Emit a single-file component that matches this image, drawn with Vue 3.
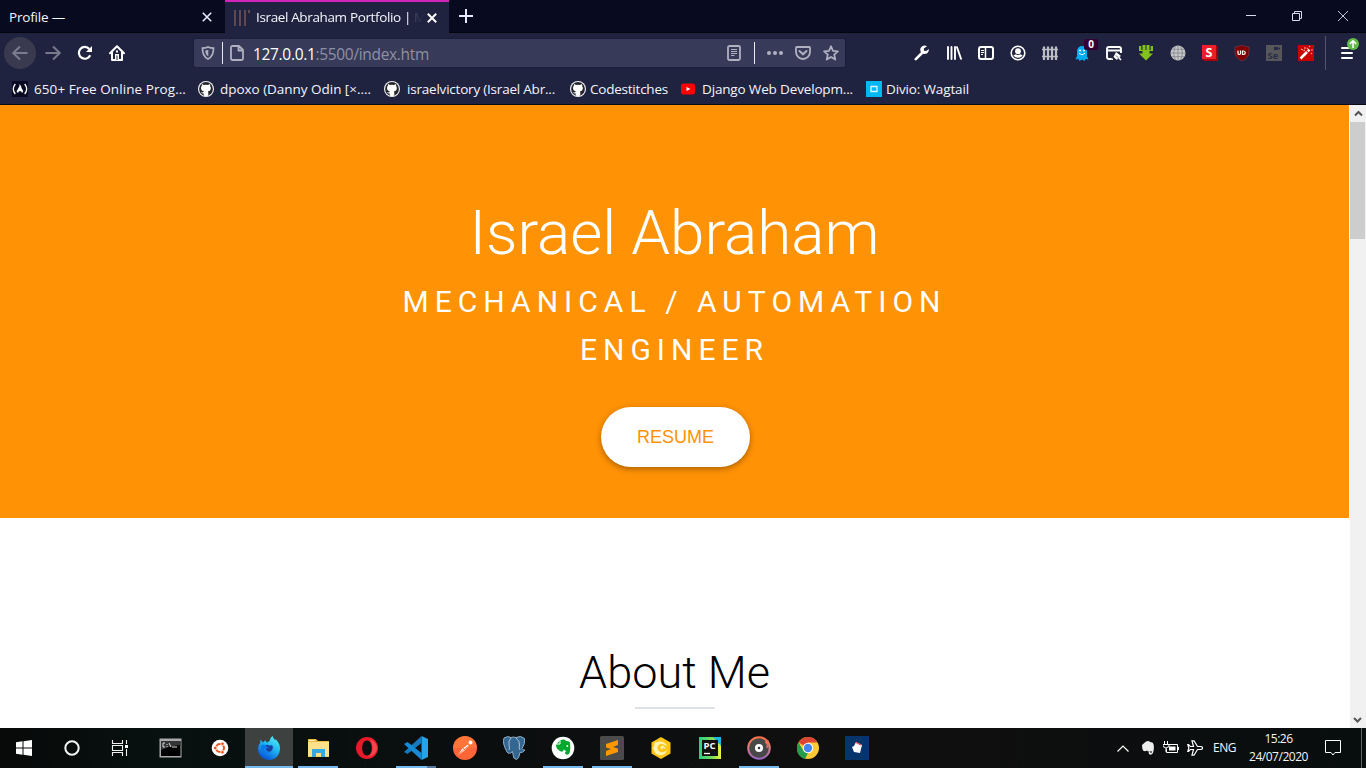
<script setup>
// Spreads or tightens letters so a label occupies its designed width.
const vFit = {
  mounted(el, { value }) {
    const natural = el.getBoundingClientRect().width
    el.style.letterSpacing = (value - natural) / el.textContent.length + 'px'
  }
}

const bookmarks = [
  { label: '650+ Free Online Prog...', icon: 'fcc', size: 186, text: 152, gap: 6 },
  { label: 'dpoxo (Danny Odin [×....', icon: 'github', size: 186, text: 151, gap: 6 },
  { label: 'israelvictory (Israel Abr...', icon: 'github', size: 186, text: 148, gap: 7 },
  { label: 'Codestitches', icon: 'github', size: 110, text: 78, gap: 4 },
  { label: 'Django Web Developm...', icon: 'youtube', size: 186, text: 151, gap: 6 },
  { label: 'Divio: Wagtail', icon: 'divio', size: 120, text: 83, gap: 4 }
]
</script>

<template>
  <div class="screen">
    <header class="tabs">
      <div class="tab">
        <span class="ui" v-fit="56">Profile —</span>
        <svg class="close" width="10" height="10" viewBox="0 0 10 10"><path d="M.8.8l8.4 8.4M9.2.8L.8 9.2" stroke="#e6e8ff" stroke-width="1.6" /></svg>
      </div>
      <div class="tab active">
        <svg class="favicon" width="18" height="16" viewBox="0 0 18 16"><path d="M2 0v16M7 0v16M12 0v16M16 0v3" stroke="#74585b" stroke-width="2" opacity=".75" /></svg>
        <span class="ui title"><span v-fit="155">Israel Abraham Portfolio |</span><i>M</i></span>
        <svg class="close" width="10" height="10" viewBox="0 0 10 10"><path d="M.8.8l8.4 8.4M9.2.8L.8 9.2" stroke="#fff" stroke-width="2" /></svg>
      </div>
      <svg class="newtab" width="14" height="14" viewBox="0 0 14 14"><path d="M7 0v14M0 7h14" stroke="#e6e8ff" stroke-width="2" /></svg>
      <div class="window">
        <svg width="12" height="12"><path d="M1 5.500h10" stroke="#d9dbea" /></svg>
        <svg width="12" height="12" fill="none" stroke="#d9dbea"><path d="M1.500 3.500h7v7h-7zM3.500 3.500v-2h7v7h-2" /></svg>
        <svg width="12" height="12"><path d="M1 1l10 10M11 1L1 11" stroke="#d9dbea" stroke-width=".9" /></svg>
      </div>
    </header>

    <nav class="toolbar">
      <div class="history">
        <span class="back"><svg width="16" height="16" viewBox="0 0 16 16"><path d="M15.500 8H1M8 1.500L1.200 8 8 14.500" fill="none" stroke="#7b7c8d" stroke-width="2" /></svg></span>
        <svg width="16" height="16" viewBox="0 0 16 16"><path d="M.5 8H15M8 1.500L14.800 8 8 14.500" fill="none" stroke="#787a8c" stroke-width="2" /></svg>
        <svg width="16" height="16" viewBox="0 0 16 16"><path d="M13.200 10.200A5.900 5.900 0 1 1 12.300 4" fill="none" stroke="#fff" stroke-width="2.200" /><path d="M15 1v6H9z" fill="#fff" /></svg>
        <svg width="16" height="16" viewBox="0 0 16 16"><path d="M1 8.300L8 1.300l7 7M3 7.500V15h10V7.500" fill="none" stroke="#fff" stroke-width="2" stroke-linecap="round" stroke-linejoin="round" /><path d="M6 9h4v6H6zM7 5.500h2v2H7z" fill="#fff" /><path d="M7.500 10.500h1V15h-1z" fill="#202340" /></svg>
      </div>

      <div class="address">
        <svg class="shield" width="14" height="14" viewBox="0 0 14 14"><path d="M7 1c2 1 4 1.200 5.500 1.200C12.600 7 11 11 7 13 3 11 1.400 7 1.500 2.200 3 2.200 5 2 7 1z" fill="none" stroke="#afb1c1" stroke-width="1.700" /><path d="M7.300 3.700v6.800C5 9 4.300 7 4.300 4.500z" fill="#afb1c1" /></svg>
        <i class="rule"></i>
        <svg class="page" width="14" height="16" viewBox="0 0 14 16"><path d="M3 1h6l4 4v8.500q0 1.500-1.500 1.500h-9Q1 15 1 13.500v-11Q1 1 2.500 1zM8.500 1v4.500H13" fill="none" stroke="#afb1c1" stroke-width="1.800" stroke-linejoin="round" /></svg>
        <span class="url" v-fit="176">127.0.0.1<b>:5500/index.htm</b></span>
        <svg class="reader" width="14" height="16" viewBox="0 0 14 16"><rect x="1" y="1" width="12" height="14" rx="1.500" fill="none" stroke="#afb1c1" stroke-width="1.800" /><path d="M4 4.500h6M4 6.500h6M4 8.500h6M4 10.500h3.500" stroke="#afb1c1" /></svg>
        <i class="rule second"></i>
        <svg class="dots" width="16" height="16" viewBox="0 0 16 16" fill="#afb1c1"><circle cx="2" cy="8" r="2" /><circle cx="8" cy="8" r="2" /><circle cx="14" cy="8" r="2" /></svg>
        <svg class="pocket" width="16" height="16" viewBox="0 0 16 16" fill="none" stroke="#afb1c1"><path d="M1.800 2h12.400q.8 0 .8.800V7A7 7 0 0 1 1 7V2.800Q1 2 1.800 2z" stroke-width="1.800" /><path d="M4.500 6L8 9.300 11.500 6" stroke-width="2" stroke-linecap="round" /></svg>
        <svg class="star" width="16" height="16" viewBox="0 0 16 16"><path d="M8 1.300l2 4.500 4.900.5-3.700 3.300 1.100 5L8 12l-4.300 2.600 1.100-5L1.100 6.300 6 5.800z" fill="none" stroke="#afb1c1" stroke-width="1.800" stroke-linejoin="round" /></svg>
      </div>

      <div class="extensions">
        <svg width="16" height="16" viewBox="0 0 16 16"><path d="M1.800 14.200L8.500 7.500" stroke="#fff" stroke-width="2.600" stroke-linecap="round" /><path d="M13 1.200A4.300 4.300 0 1 0 14.800 4L12.300 6 10 5.800 9.800 3.600z" fill="#fff" /></svg>
        <svg width="16" height="16" viewBox="0 0 16 16" stroke="#fff" stroke-width="1.900" stroke-linecap="round"><path d="M2 2v12M5.500 2v12M9 2v12M11 2.200l4 11.600" /></svg>
        <svg width="16" height="16" viewBox="0 0 16 16" stroke="#fff" fill="none"><rect x="1" y="2" width="14" height="12" rx="2" stroke-width="2" /><path d="M7.500 2v12" stroke-width="1.500" /><path d="M3 5.500h3M3 7.500h3M3 9.500h2" /></svg>
        <svg width="16" height="16" viewBox="0 0 16 16"><circle cx="8" cy="8" r="6.800" fill="none" stroke="#fff" stroke-width="1.600" /><circle cx="8" cy="6.200" r="2.900" fill="#fff" /><path d="M3.300 10.500q1.500-1 2.500-1.200 2.200 1.300 4.400 0 1 .2 2.500 1.200A6 6 0 0 1 3.300 10.500z" fill="#fff" /></svg>
        <svg width="16" height="16" viewBox="0 0 16 16" stroke="#bcbcc3"><path d="M2 1.500V15M6 1.500V15M10 1.500V15M14 1.500V15" stroke-width="2.200" /><path d="M0 4.500h16M0 11.500h16" stroke-width="1.300" /></svg>
        <span class="ghost">
          <svg width="16" height="16" viewBox="0 0 16 16"><path d="M3 6a5 5 0 0 1 10 0v5l1.500 3.500-3-.5-1 2L8 14.500 5.500 16l-1-2-3 .5L3 11z" fill="#00aef0" /><circle cx="6" cy="5.500" r="1" fill="#fff" /><circle cx="10" cy="5.500" r="1" fill="#fff" /><path d="M5 8.300q3 3 6 0" fill="none" stroke="#fff" /></svg>
          <em>0</em>
        </span>
        <svg width="16" height="16" viewBox="0 0 16 16"><path d="M7 14H3q-2 0-2-2V4q0-2 2-2h10q2 0 2 2v4M1 5.500h14" fill="none" stroke="#fff" stroke-width="1.900" /><path d="M10 7l5 4-1.500 1 2 2.500-1 1-2.500-2.500-1 2-3.500-3z" fill="#fff" /><path d="M10 10.500l2 2M5.500 14l2-1.500" stroke="#202340" stroke-width=".8" /></svg>
        <svg width="16" height="16" viewBox="0 0 16 16"><path d="M1 1h2.300v4H1zM12.700 1H15v4h-2.300zM4.500 0h3v5h-3zM8.500 0h3v5h-3zM1 5h3.500v1H1zM11.500 5H15v1h-3.500zM4.500 5h7v3.500H15L8 15.500 1 8.500h3.500z" fill="#82c11b" /></svg>
        <svg width="16" height="16" viewBox="0 0 16 16"><circle cx="8" cy="8" r="7.500" fill="#c7c7c7" /><path d="M8 .5v15M.5 8h15M2 4.300h12M2 11.700h12M5.500 1Q2 8 5.500 15M10.500 1Q14 8 10.500 15" fill="none" stroke="#777b85" stroke-width=".7" /></svg>
        <svg class="roomy" width="16" height="16" viewBox="0 0 16 16"><path d="M0 0h14l2 2v14H2l-2-2z" fill="#a5000c" /><path d="M0 0h14v14H0z" fill="#ee1e28" /><text x="7" y="11.500" class="glyph s">S</text></svg>
        <svg width="16" height="16" viewBox="0 0 16 16"><path d="M8 0q3.500 1.800 7 2v5q0 6-7 9-7-3-7-9V2q3.500-.2 7-2z" fill="#800000" stroke="#7b4350" stroke-width=".6" /><path d="M4 5.500v2.700q0 1.300 1.200 1.300t1.300-1.300V5.500M8.500 6v3.500h.8q2-.2 2-1.750T9.300 6z" fill="none" stroke="#fff" stroke-width="1.200" /></svg>
        <svg class="roomy" width="16" height="16" viewBox="0 0 16 16"><path d="M0 0h16v16H0z" fill="#57575b" /><path d="M8 2h4v3H8zM12.500 3.300L14 2v3l-1.500-1z" fill="#242949" /><text x="7" y="14" class="glyph se">Se</text></svg>
        <svg width="16" height="16" viewBox="0 0 16 16"><path d="M0 0h16v16H0z" fill="#c90000" /><path d="M2.500 13.500L9 7" stroke="#fff" stroke-width="2.600" /><path d="M9.800 6.300L11.500 4.600" stroke="#fff" stroke-width="2.500" /><path d="M3 4l2 1M7 2v2M5.500 6l1.500-1M11 2l1-1M13 5h2M13 8l1 1M9 3l1 1" stroke="#ff9a95" stroke-width="1.200" /></svg>
      </div>
      <i class="menu-rule"></i>
      <span class="menu">
        <svg width="14" height="14" viewBox="0 0 14 14"><path d="M2 2h10M2 7h10M2 12h10" stroke="#fff" stroke-width="2" stroke-linecap="round" /></svg>
        <svg class="update" width="12" height="12" viewBox="0 0 12 12"><circle cx="6" cy="6" r="6" fill="#62bb46" /><path d="M6 10V3M2.800 6L6 2.800 9.200 6" fill="none" stroke="#fff" stroke-width="1.500" /></svg>
      </span>
    </nav>

    <div class="bookmarks">
      <div v-for="b in bookmarks" :key="b.label" class="bookmark" :style="{ width: b.size + 'px', gap: b.gap + 'px' }">
        <svg v-if="b.icon === 'fcc'" width="16" height="16" viewBox="0 0 16 16"><path d="M0 0h16v16H0z" fill="#0a0a23" /><path d="M3.300 3Q-.7 8 3.300 13M12.700 3q4 5 0 10" fill="none" stroke="#fff" stroke-width="1.300" /><path d="M7.500 3q2 2 2 4l1.700 3-1 2q-.8-2-2.200-2t-2 2l-1.500-1.500L7.500 5z" fill="#fff" /></svg>
        <svg v-else-if="b.icon === 'github'" width="16" height="16" viewBox="0 0 16 16"><circle cx="8" cy="8" r="8" fill="#f4f4f5" /><circle cx="8" cy="8" r="6.900" fill="#25262b" /><path d="M4 3l2 1q2-.5 4 0l2-1q.4 1.100.1 2 1.100 1.300.7 3-.5 2.100-3 2.500.6.700.5 1.500v2.500Q8 15.500 5.700 14.500v-2q-2 .3-2.700-1.500 1.800 1.200 3-.5-3-.6-3-3.500 0-1.200.9-2.200Q3.600 4 4 3z" fill="#fff" /></svg>
        <svg v-else-if="b.icon === 'youtube'" width="16" height="16" viewBox="0 0 16 16"><rect x="1" y="2.500" width="14" height="11" rx="2.500" fill="#f00" /><path d="M6.500 6l4 2-4 2z" fill="#fff" /></svg>
        <svg v-else width="16" height="16" viewBox="0 0 16 16"><path d="M0 0h16v16H0z" fill="#00b8f5" /><path d="M5 5.500h6v5H5z" fill="none" stroke="#d9f5ff" stroke-width="1.300" /></svg>
        <span class="ui" v-fit="b.text">{{ b.label }}</span>
      </div>
    </div>

    <div class="viewport">
      <main>
        <section class="hero">
          <h1 v-fit="410">Israel Abraham</h1>
          <h2><span v-fit="544">MECHANICAL / AUTOMATION</span><span v-fit="189">ENGINEER</span></h2>
          <button>RESUME</button>
        </section>
        <section class="about">
          <h3 v-fit="191">About Me</h3>
          <hr />
        </section>
      </main>
      <aside class="scroll">
        <svg width="17" height="17"><path d="M5 10.500l3.500-3.500 3.500 3.500" fill="none" stroke="#555" stroke-width="2" /></svg>
        <i></i>
        <svg class="down" width="17" height="17"><path d="M4 7l3.500 3.500L11 7" fill="none" stroke="#555" stroke-width="2" /></svg>
      </aside>
    </div>

    <footer class="taskbar">
      <div class="system">
        <span><svg width="16" height="16" viewBox="0 0 16 16"><path d="M0 2.300L6.500 1.300v6.200H0zM7.500 1.200L16 0v7.500H7.500zM0 8.500h6.500v6.200L0 13.700zM7.500 8.500H16V16l-8.500-1.200z" fill="#fff" /></svg></span>
        <span><svg width="16" height="16" viewBox="0 0 16 16"><circle cx="8" cy="8" r="6.700" fill="none" stroke="#f4f4f4" stroke-width="2" /></svg></span>
        <span><svg width="18" height="16" viewBox="0 0 18 16"><path d="M1.500 0v3.500h10V0M1.500 16v-3.500h10V16M1.500 5.500h10v5h-10zM15.500 0v4M15.500 9v7" fill="none" stroke="#f0f0f0" stroke-width="1.100" /><path d="M14 5h3v3h-3z" fill="#fff" /></svg></span>
      </div>
      <div class="apps">
        <span><svg width="24" height="24" viewBox="0 0 24 24"><path d="M.5 2.500h22v19H.5z" fill="#aaa" /><path d="M2 5h19.500v15H2z" fill="#000" /><path d="M2 5h19.500v4Q11 10 2 14z" fill="#323436" /><path d="M6 7H4v4h2M8 8v1M8 10v1M10 7l2 4M13 11h5" fill="none" stroke="#ddd" stroke-width="1" /></svg></span>
        <span><svg width="18" height="18" viewBox="0 0 18 18"><circle cx="9" cy="9" r="8.300" fill="#fff" /><circle cx="9" cy="9" r="4" fill="none" stroke="#e95420" stroke-width="2" /><g fill="#e95420" stroke="#fff" stroke-width=".8"><circle cx="4.200" cy="9" r="1.800" /><circle cx="11.500" cy="4.700" r="1.800" /><circle cx="11.500" cy="13.300" r="1.800" /></g></svg></span>
        <span class="current"><svg width="24" height="24" viewBox="0 0 24 24"><defs><linearGradient id="fx" x1=".8" y1="0" x2=".25" y2="1"><stop stop-color="#55f1f6" /><stop offset=".45" stop-color="#1fb6f5" /><stop offset="1" stop-color="#064ad0" /></linearGradient></defs><path d="M15.500 0q1 3 3 4.300V3q4.500 4.500 4.500 9.500A11 11 0 0 1 1 13.500Q.8 9 3.300 6.800V3.500L6 6.500q1.500-2 3-2l.5 2.300 3-1.800Q12.700 2 15.500 0z" fill="url(#fx)" /><path d="M8 9.500q3-1.500 4 .2 3-1 4 1-.5 5-4 5T8 9.500z" fill="#17409f" /><path d="M4 10q3-3 5.500.5L12 11q-2.500 2.500-5 2 1.500 4 6 3.300Q9.500 20 6 17.200 3.500 14 4 10z" fill="#0b79e9" /></svg></span>
        <span class="open"><svg width="24" height="24" viewBox="0 0 24 24"><path d="M2 3h8l2 2h11v16H2z" fill="#e9b940" /><path d="M2 6h21v14.500H2z" fill="#ffe08a" /><path d="M3 4h6v1H3z" fill="#fff3c2" /><path d="M6 13h13v8h-4v-4h-5v4H6z" fill="#36a9e1" /></svg></span>
        <span><svg width="24" height="24" viewBox="0 0 24 24"><path fill-rule="evenodd" d="M12 1a11 11 0 1 0 0 22 11 11 0 0 0 0-22zm0 3.500c3 0 4.800 3.400 4.800 7.500s-1.800 7.500-4.800 7.500S7.200 16.100 7.200 12 9 4.500 12 4.500z" fill="#e71a2b" /><path d="M14 3q3.500 3 3.500 9T13 20.500q4 .5 7-3 4-6 0-11-2.500-3-6-3.500z" fill="#fb5055" opacity=".8" /></svg></span>
        <span class="code"><svg width="24" height="24" viewBox="0 0 24 24"><path d="M17.500 0L24 3v18l-6.500 3z" fill="#25a4ed" /><path d="M17.500 0v7L3.500 18 0 16z" fill="#1479bd" /><path d="M3.500 6L0 8l17.500 16v-7z" fill="#168bd5" /></svg></span>
        <span><svg width="24" height="24" viewBox="0 0 24 24"><circle cx="12" cy="12" r="12" fill="#ff6637" /><path d="M0 12a12 12 0 0 1 24 0z" fill="#ff8b3d" opacity=".4" /><circle cx="17.500" cy="6.500" r="2" fill="#fff" /><path d="M15 8.500L9 13l-4 6 6-4 4.500-5z" fill="#fff" /><path d="M5.500 18.500l9-8M10 12l2 2" stroke="#ff6637" stroke-width=".8" /></svg></span>
        <span><svg width="24" height="24" viewBox="0 0 24 24"><path d="M2 2Q6-.5 9 1.500q2.500-1 5 0Q19-1 22.500 2.500q1 5-2.500 10 1 2 3 1.500-2 3-5 2.500-1 6.500-3.500 7-3.500-.5-3.500-5l-.5-3Q7 19 5 16 0 7 2 2z" fill="#336791" stroke="#8fadc5" stroke-width="1" /><path d="M9 2Q6 5 7 9q1 3 0 5M14 2q4 3 3.500 7-1 3 .5 5" fill="none" stroke="#a9c1d4" stroke-width="1" /></svg></span>
        <span class="open"><svg width="24" height="24" viewBox="0 0 24 24"><circle cx="12" cy="12" r="11.300" fill="#fff" /><path d="M5 8.500L9 4.500q4-2 6 .5 4 0 4 2 1 7-1 11-3 2-4-1 0-2.500 3-2-4 0-4-2-1 4-4 2Q5 13 5 8.500z" fill="#00a82d" /><path d="M5 8h4V4.500" fill="none" stroke="#fff" /><circle cx="16.300" cy="10" r="1" fill="#fff" /></svg></span>
        <span class="open"><svg width="24" height="24" viewBox="0 0 24 24"><rect width="24" height="24" rx="1.500" fill="#4b4b4b" /><path d="M6 8l12-4v5l-5 2 5 1.500V16L6 20v-5l5-2-5-1.500z" fill="#ff9800" /></svg></span>
        <span><svg width="20" height="22" viewBox="0 0 20 22"><path d="M10 0l9.500 5.500v11L10 22 .5 16.500v-11z" fill="#ffc515" /><path d="M3.500 5.500l5-1q6 0 7.500 5l-1.500-1q-3-2.500-6-1-3 2-1.500 5.500 2 3 5.500 2l3.500-1.500q-1.500 4.500-6.500 4.500-5.500 0-6.500-5l-1.500-2 1.500-1.500z" fill="#fff3b0" /><path d="M10 9q4-1 4.500 3.500l-2-2q-1 2.500-3 1.500z" fill="#fff3b0" /></svg></span>
        <span><svg width="22" height="22" viewBox="0 0 22 22"><defs><linearGradient id="py"><stop stop-color="#20d486" /><stop offset=".6" stop-color="#79dc55" /><stop offset="1" stop-color="#eef43d" /></linearGradient></defs><path d="M0 0h22v22H0z" fill="url(#py)" /><path d="M14 0h8v9z" fill="#16b9e6" /><path d="M3 3h16v16H3z" fill="#111" /><text x="10.500" y="12" class="glyph pc">PC</text><path d="M5 16.500h6" stroke="#fff" stroke-width="1.300" /></svg></span>
        <span class="open"><svg width="24" height="24" viewBox="0 0 24 24"><defs><linearGradient id="ring" x2="0" y2="1"><stop stop-color="#ff7043" /><stop offset=".5" stop-color="#d97d83" /><stop offset="1" stop-color="#9866c6" /></linearGradient></defs><circle cx="12" cy="12" r="10.800" fill="#484848" stroke="url(#ring)" stroke-width="2" /><path d="M20.500 5v7" stroke="#d96d64" stroke-width="2" /><circle cx="20" cy="6" r="2" fill="#f46f53" /><circle cx="12" cy="12" r="4" fill="#fff" /><circle cx="12" cy="12" r="1.300" fill="#333" /></svg></span>
        <span><svg width="22" height="22" viewBox="0 0 22 22"><circle cx="11" cy="11" r="11" fill="#fcc934" /><path d="M11 11L1.500 5.500A11 11 0 0 1 20.500 5.500H11z" fill="#df4334" /><path d="M1.500 5.500L6.500 14l4.500 2-3 6A11 11 0 0 1 1.500 5.500z" fill="#269c4b" /><circle cx="11" cy="11" r="5.200" fill="#fff" /><circle cx="11" cy="11" r="4.200" fill="#4485ef" /></svg></span>
        <span><svg width="24" height="24" viewBox="0 0 24 24"><path d="M0 0h24v24H0z" fill="#06356c" /><path d="M7 11l2-1 2-4 6 3-2 8-6-1z" fill="#fff" /><path d="M11 6.500l5 2.500" stroke="#e94a52" stroke-width="1.300" /></svg></span>
      </div>
      <div class="tray">
        <svg width="12" height="7" viewBox="0 0 12 7"><path d="M.5 6.500L6 1l5.500 5.500" fill="none" stroke="#fff" stroke-width="1.200" /></svg>
        <svg class="elephant" width="12" height="14" viewBox="0 0 12 14"><path d="M0 4L4 .5q3-1 4 .5 3 0 3.500 2 1 5-.5 9-2 3-4 1-1-2 1-3-2 1-3-.5-2 1.500-4 0Q0 7 0 4z" fill="#eee" /><circle cx="9" cy="11" r="1" fill="#444" /></svg>
        <svg class="battery" width="16" height="14" viewBox="0 0 16 14"><path d="M6 3.500h8.500v8H3.500V8M15.500 6v3" fill="none" stroke="#fff" /><path d="M6 5.500h6.500v4H6z" fill="#fff" /><path d="M1.500 0v3M4.500 0v3M0 3.500h6v2L3 7 0 5.500zM3 7v4" fill="none" stroke="#fff" /></svg>
        <svg class="plane" width="16" height="16" viewBox="0 0 16 16"><path d="M15.500 8q0-1.500-2-1.500h-3L7 .8H5l1.500 5.700H3.300L1.500 4.500H.8L1.800 8l-1 3.500h.7l1.800-2h3.200L5 15.200h2l3.500-5.700h3q2 0 2-1.500z" fill="none" stroke="#fff" stroke-width="1.200" /></svg>
        <span class="lang"><span class="ui" v-fit="23">ENG</span></span>
        <div class="clock"><span v-fit="28">15:26</span><span v-fit="59">24/07/2020</span></div>
        <svg class="notice" width="16" height="16" viewBox="0 0 16 16"><path d="M.5.500h15v12H10L8 15l-2-2.500H.5z" fill="none" stroke="#fff" /></svg>
        <i class="desktop"></i>
      </div>
    </footer>
  </div>
</template>

<style>
html, body { margin: 0; overflow: hidden; }
</style>

<style scoped>
.screen { width: 1366px; height: 768px; display: flex; flex-direction: column; overflow: hidden; background: #fff; }
.screen * { box-sizing: border-box; }
svg { display: block; flex: none; }
.ui { font: 13.500px/18px "Open Sans", "Noto Sans", sans-serif; color: #f4f4fb; white-space: nowrap; flex: none; }

.tabs { height: 33px; display: flex; background: #080a20; box-shadow: inset 0 -1px #03040d; flex: none; }
.tab { width: 225px; display: flex; align-items: center; padding: 1px 13px 0 9px; }
.tab .ui { margin-top: -1px; }
.tab .close { margin-left: auto; }
.tab.active { width: 224px; background: #202340; border-top: 2px solid #d323bd; padding: 0 12px 0 8px; }
.tab .title { display: flex; width: 170px; margin-left: 5px; mask-image: linear-gradient(90deg, #000 156px, transparent 168px); }
.title i { font-style: normal; color: #50536c; margin-left: 3px; }
.newtab { margin: 9px 0 0 10px; }
.window { display: flex; gap: 34px; margin: 10px 17px 0 auto; }

.toolbar { height: 39px; background: #202340; display: flex; align-items: center; flex: none; }
.history { display: flex; gap: 16px; align-items: center; width: 194px; padding: 1px 0 0 4px; }
.back { width: 32px; height: 32px; border-radius: 50%; background: #393a50; display: flex; align-items: center; justify-content: center; margin-right: -7px; }
.address { width: 651px; height: 28px; background: #373a58; border-radius: 2px; box-shadow: 0 0 2px #151730; display: flex; align-items: center; padding-left: 7px; margin-top: 1px; }
.rule { width: 1px; height: 22px; background: #e9e9ef; margin-left: 7px; }
.page { margin-left: 7px; }
.url { margin-left: 9px; font: 15.500px/20px "Open Sans", "Noto Sans", sans-serif; color: #fff; white-space: nowrap; padding-top: 2px; }
.url b { font-weight: 400; color: #8f91a3; }
.reader { margin-left: auto; }
.rule.second { margin-left: 13px; }
.dots { margin-left: 12px; }
.pocket { margin-left: 12px; }
.star { margin: 0 6px 0 12px; }
.extensions { display: flex; gap: 16px; margin-left: 69px; padding-top: 1px; }
.ghost { position: relative; }
.ghost em { position: absolute; left: 10px; top: -6px; width: 14px; height: 11px; border-radius: 2px; background: #330033; color: #fff; font: bold 10px/11px "Open Sans", sans-serif; text-align: center; }
.roomy { overflow: visible; }
.glyph { font-family: "Open Sans", sans-serif; font-weight: 700; fill: #fff; text-anchor: middle; }
.glyph.s { font-size: 12.500px; }
.glyph.se { font-size: 9.500px; fill: #292d48; }
.glyph.pc { font-size: 9.500px; }
.menu-rule { width: 1px; height: 34px; background: #53556b; margin-left: 11px; }
.menu { position: relative; margin: 1px 0 0 14px; }
.update { position: absolute; left: 7px; top: -8px; }

.bookmarks { height: 33px; background: #202340; border-bottom: 1px solid #090a1a; display: flex; padding-left: 12px; flex: none; }
.bookmark { display: flex; align-items: center; padding-top: 2px; flex: none; }

.viewport { height: 623px; display: flex; flex: none; }
main { width: 1349px; }
.hero { height: 413px; background: #ff9205; display: flex; flex-direction: column; align-items: center; padding-top: 89px; color: #fff; }
h1, h2, h3 { margin: 0; font-family: Roboto, sans-serif; white-space: nowrap; }
h1 { font-size: 62px; line-height: 78px; font-weight: 300; }
h2 { margin-top: 6px; font-size: 30px; line-height: 48px; font-weight: 400; display: flex; flex-direction: column; align-items: center; }
button { margin: 33px 0 0 2px; width: 149px; height: 60px; border: 0; border-radius: 30px; background: #fff; color: #ff9205; font: 18px "Liberation Sans", Arial, sans-serif; box-shadow: 0 2px 5px rgba(0,0,0,.24), 0 2px 8px rgba(0,0,0,.12); }
.about { height: 210px; padding-top: 126px; display: flex; flex-direction: column; align-items: center; }
h3 { color: #000; font-size: 45px; line-height: 58px; font-weight: 300; }
hr { width: 80px; height: 2px; margin: 5px 0 0; border: 0; background: #dee2e6; }
.scroll { width: 17px; background: #f1f1f1; border-left: 1px solid #fff; display: flex; flex-direction: column; }
.scroll i { width: 15px; height: 117px; background: #cdcdcd; }
.scroll .down { margin-top: auto; }

.taskbar { height: 40px; background: linear-gradient(90deg, #080909, #07110f 12%, #0b0e0f 35%, #100f0f 65%, #080d0e); display: flex; flex: none; }
.system, .apps { display: flex; }
.system span, .apps span { width: 48px; height: 40px; display: flex; align-items: center; justify-content: center; }
.apps { gap: 1px; margin-left: 3px; }
.apps span { border: solid transparent; border-width: 2px 4px 0; }
.apps .current { background: #3d4140; border: 0; box-shadow: inset 0 -2px #76b9ed; }
.apps .open { background: linear-gradient(#76b9ed, #76b9ed) bottom / 40px 2px no-repeat content-box; }
.apps span svg { margin-top: -2px; }
.apps .current svg { margin-top: 0; }
.apps .code { background: linear-gradient(90deg, #76b9ed 31px, #54799a 31px) bottom / 40px 2px no-repeat content-box; }
.tray { display: flex; align-items: center; margin-left: auto; }
.elephant { margin-left: 13px; }
.battery { margin-left: 9px; }
.plane { margin-left: 8px; }
.lang { width: 33px; padding-left: 10px; display: flex; }
.lang .ui { font-size: 12px; }
.clock { display: flex; flex-direction: column; align-items: center; width: 59px; margin-left: 13px; font: 12px/18px "Open Sans", sans-serif; color: #f5f5f5; white-space: nowrap; margin-top: -1px; }
.notice { margin-left: 17px; }
.desktop { width: 1px; height: 40px; background: #626464; margin: 0 4px 0 20px; }
</style>
